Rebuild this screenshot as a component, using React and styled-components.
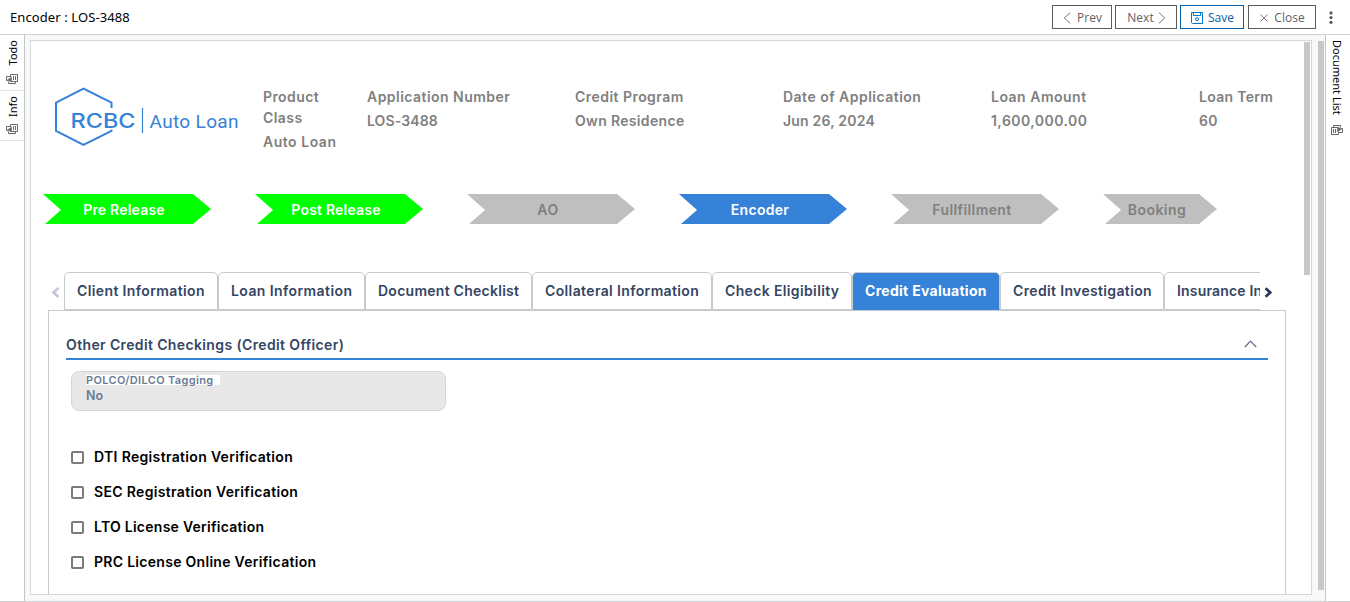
import React from "react";
import styled, { createGlobalStyle } from "styled-components";

const Global = createGlobalStyle`
  *, *::before, *::after { box-sizing: border-box; }
  body { margin: 0; background: #fff; overflow: hidden; font-family: "Open Sans", sans-serif; }
`;

const Page = styled.div`
  display: flex;
  flex-direction: column;
  width: 1350px;
  height: 602px;
`;

const TopBar = styled.header`
  flex: none;
  display: flex;
  align-items: center;
  justify-content: space-between;
  height: 35px;
  padding: 0 17px 0 10px;
  border-bottom: 1px solid #d1d2d4;
`;

const Title = styled.h1`
  margin: 0;
  font: 400 13px/18px "Noto Sans", sans-serif;
  letter-spacing: 0.1px;
  color: #000;
`;

const Actions = styled.div`
  display: flex;
  align-items: center;
`;

const ActionButton = styled.button`
  display: flex;
  align-items: center;
  justify-content: center;
  gap: ${(p) => p.$gap || 6}px;
  width: ${(p) => p.$w}px;
  height: 24px;
  margin: 0 ${(p) => p.$after}px 0 0;
  padding: 2px 0 0 1px;
  border: 1px solid ${(p) => (p.$primary ? "#0461a5" : "#5a5b5d")};
  background: #fff;
  color: ${(p) => (p.$primary ? "#0461a5" : "#5f6062")};
  font: 400 12px/16px "Open Sans", sans-serif;
`;

const Body = styled.div`
  display: flex;
  height: 567px;
  border-bottom: 1px solid #d1d2d4;
`;

const LeftRail = styled.aside`
  flex: none;
  width: 25px;
  border-right: 1px solid #c4c5c7;
`;

const RailItem = styled.div`
  display: flex;
  flex-direction: column;
  align-items: center;
  justify-content: space-between;
  height: ${(p) => p.$h}px;
  padding: 5px 0 6px;
  border-bottom: 1px solid #e1e2e3;
`;

const RailLabel = styled.span`
  writing-mode: vertical-rl;
  transform: ${(p) => (p.$up ? "rotate(180deg)" : "none")};
  margin-left: ${(p) => (p.$up ? 2 : 0)}px;
  font: 400 11px/16px "Noto Sans", sans-serif;
  color: #000;
`;

const RightRail = styled.aside`
  flex: none;
  display: flex;
  flex-direction: column;
  align-items: center;
  gap: 10px;
  width: 25px;
  padding: 5px 2px 0 0;
  border-left: 1px solid #c4c5c7;
`;

const Content = styled.div`
  flex: 1;
  display: flex;
  align-items: flex-start;
  min-width: 0;
  padding: 5px 1px 0 5px;
  background: #f7f8fa;
`;

const Frame = styled.div`
  flex: 1;
  display: flex;
  height: 555px;
  min-width: 0;
  padding-right: 1px;
  border: 1px solid #d6d7d8;
  background: #fff;
`;

const Thumb = styled.div`
  flex: none;
  width: 6px;
  height: ${(p) => p.$h}px;
  margin-top: 1px;
  margin-left: ${(p) => p.$left || 0}px;
  background: #c8c8c8;
`;

const Main = styled.main`
  flex: 1;
  min-width: 0;
  height: 553px;
  overflow: hidden;
  font-family: Inter, sans-serif;
  font-size: 14px;
  font-weight: 600;
`;

const Summary = styled.section`
  display: flex;
  height: 153px;
  padding: 45px 0 0 23px;
`;

const LogoBox = styled.div`
  flex: none;
  width: 209px;
`;

const SummaryItem = styled.dl`
  flex: none;
  width: ${(p) => p.$w || 208}px;
  margin: 0;
  padding-right: 30px;
  color: #808080;
`;

const Term = styled.dt`
  line-height: 21px;
  letter-spacing: ${(p) => p.$ls}px;
`;

const Value = styled.dd`
  margin: 3px -30px 0 0;
  line-height: 21px;
  letter-spacing: ${(p) => p.$ls}px;
`;

const Steps = styled.nav`
  display: flex;
  gap: 44px;
  height: 30px;
  padding-left: 12px;
`;

const Step = styled.div`
  flex: none;
  width: ${(p) => p.$w || 168}px;
  height: 30px;
  padding: 1px 6px 0 0;
  clip-path: polygon(0 0, calc(100% - 18px) 0, 100% 50%, calc(100% - 18px) 100%, 2px 100%, 18px 53%);
  background: ${(p) => (p.$state === "done" ? "#00ff00" : p.$state === "active" ? "#3682d9" : "#bfbfbf")};
  color: ${(p) => (p.$state === "idle" ? "#808080" : "#fff")};
  line-height: 29px;
  text-align: center;
  letter-spacing: ${(p) => p.$ls}px;
`;

const TabStrip = styled.div`
  display: flex;
  align-items: center;
  height: 38px;
  margin: 48px 0 0 20px;
`;

const TabArrow = styled.span`
  flex: none;
  display: flex;
  width: 13px;
  padding-top: 3px;
`;

const TabList = styled.div`
  flex: none;
  display: flex;
  width: 1196px;
  overflow: hidden;
`;

const Tab = styled.div`
  flex: none;
  width: ${(p) => p.$w}px;
  height: 38px;
  padding-left: 12px;
  border: 1px solid #c8c9ca;
  border-bottom-color: ${(p) => (p.$active ? "#3682d9" : "#c8c9ca")};
  border-radius: 5px 5px 0 0;
  background: ${(p) => (p.$active ? "#3682d9" : "#fff")};
  color: ${(p) => (p.$active ? "#fff" : "#344563")};
  font-weight: ${(p) => (p.$active ? 700 : 600)};
  line-height: 36px;
  white-space: nowrap;
  letter-spacing: ${(p) => p.$ls}px;
`;

const Panel = styled.section`
  width: 1238px;
  height: 320px;
  margin-left: 17px;
  padding: 21px 17px 0;
  border: 1px solid #c8c9ca;
`;

const SectionHeader = styled.div`
  display: flex;
  align-items: center;
  justify-content: space-between;
  height: 28px;
  padding: 0 11px 2px 0;
  border-bottom: 2px solid #3682d9;
  color: #344563;
`;

const SectionTitle = styled.h2`
  margin: 0;
  font: inherit;
  letter-spacing: ${(p) => p.$ls}px;
`;

const Field = styled.div`
  display: flex;
  flex-direction: column;
  align-items: flex-start;
  width: 375px;
  height: 40px;
  margin: 11px 0 0 5px;
  padding: 3px 14px 0;
  border: 1px solid #d5d5d5;
  border-radius: 8px;
  background: #e8e8e8;
  color: #6b7c95;
`;

const FieldLabel = styled.label`
  width: 134px;
  height: 10px;
  background: #fff;
  font-size: 11px;
  font-weight: 600;
  line-height: 11px;
  white-space: nowrap;
  letter-spacing: ${(p) => p.$ls}px;
`;

const FieldValue = styled.span`
  margin-top: 2px;
  font-size: 12.5px;
  line-height: 18px;
`;

const CheckList = styled.div`
  display: flex;
  flex-direction: column;
  margin: 29px 0 0 5px;
`;

const CheckRow = styled.label`
  display: flex;
  align-items: center;
  gap: 10px;
  height: 35px;
  color: #000;
  letter-spacing: ${(p) => p.$ls}px;
`;

const CheckText = styled.span`
  padding-bottom: 2px;
`;

const Box = styled.span`
  width: 13px;
  height: 13px;
  border: 2px solid #7b7b7b;
  border-radius: 2px;
  background: #fff;
`;

const LogoSvg = styled.svg`
  display: block;
`;

const Logo = () => (
  <LogoSvg width="186" height="62" viewBox="0 0 186 62" fill="none" stroke="#3682d9">
    <path d="M57.5 22V16.5L29.5 2.5L2 16.5V45L29.5 59L57.5 45V43.5" strokeWidth="2" />
    <path d="M88.5 22V47" strokeWidth="1.2" />
    <g fill="#3682d9" stroke="none">
      <text x="16.5" y="42" fontFamily="Inter, sans-serif" fontSize="20.5" fontWeight="500" textLength="65" lengthAdjust="spacingAndGlyphs">RCBC</text>
      <text x="95.5" y="41.5" fontFamily="Roboto, sans-serif" fontSize="19" fontWeight="400" textLength="89" lengthAdjust="spacing">Auto Loan</text>
    </g>
  </LogoSvg>
);

const PanelIcon = ({ flip }) => (
  <svg width="12" height="10" viewBox="0 0 12 10" fill="none" stroke="#68696b">
    <g transform={flip ? "rotate(180 6 5)" : undefined}>
      <path d="M4.5 3V0.5H11.5V7.5H5M9.5 7.5V9.5H2.5V7.5M4.5 2.5H0.5V6.5H2" />
      <path d="M7.5 2V6M9.5 2V6" />
      <path d="M1.5 6L5.5 3V8Z" fill="#68696b" strokeWidth=".6" />
    </g>
  </svg>
);

const AngleIcon = ({ d, w = 8, h = 12, color = "#77787a", stroke = 1 }) => (
  <svg width={w} height={h} viewBox={`0 0 ${w} ${h}`} fill="none" stroke={color} strokeWidth={stroke}>
    <path d={d} />
  </svg>
);

const SaveIcon = () => (
  <svg width="12" height="12" viewBox="0 0 12 12" fill="none" stroke="#0078c8">
    <path d="M0.5 0.5H11.5V11.5H1.5L0.5 10.5ZM2.5 0.5V3.5H9.5V0.5" />
    <circle cx="6" cy="7.2" r="1.5" />
  </svg>
);

const MoreIcon = () => (
  <svg width="4" height="13" viewBox="0 0 4 13" fill="#58595b">
    <circle cx="2" cy="1.9" r="1.6" />
    <circle cx="2" cy="6.6" r="1.6" />
    <circle cx="2" cy="11.3" r="1.6" />
  </svg>
);

const summary = [
  { label: "Product Class", value: "Auto Loan", w: 104, l: 0.42, v: 0.52 },
  { label: "Application Number", value: "LOS-3488", l: 0.46, v: 0.1 },
  { label: "Credit Program", value: "Own Residence", l: 0.46, v: 0.33 },
  { label: "Date of Application", value: "Jun 26, 2024", l: 0.48, v: 0.2 },
  { label: "Loan Amount", value: "1,600,000.00", l: 0.5, v: 0.45 },
  { label: "Loan Term", value: "60", l: 0.3, v: 0.3 },
];

const steps = [
  { name: "Pre Release", state: "done", ls: 0.2 },
  { name: "Post Release", state: "done", ls: 0.2 },
  { name: "AO", state: "idle", ls: 0.5 },
  { name: "Encoder", state: "active", ls: 0.3 },
  { name: "Fullfillment", state: "idle", ls: 0.4 },
  { name: "Booking", state: "idle", ls: 0.45, w: 114 },
];

const tabs = [
  { name: "Client Information", w: 154, ls: 0.38 },
  { name: "Loan Information", w: 147, ls: 0.41 },
  { name: "Document Checklist", w: 167, ls: 0.26 },
  { name: "Collateral Information", w: 180, ls: 0.37 },
  { name: "Check Eligibility", w: 140, ls: 0.36 },
  { name: "Credit Evaluation", w: 148, ls: 0.29, active: true },
  { name: "Credit Investigation", w: 164, ls: 0.35 },
  { name: "Insurance Information", w: 172, ls: 0.18 },
];

const checks = [
  { name: "DTI Registration Verification", ls: 0.33 },
  { name: "SEC Registration Verification", ls: 0.33 },
  { name: "LTO License Verification", ls: 0.26 },
  { name: "PRC License Online Verification", ls: 0.29 },
];

export default function App() {
  return (
    <Page>
      <Global />
      <TopBar>
        <Title>Encoder : LOS-3488</Title>
        <Actions>
          <ActionButton $w={60} $after={3}><AngleIcon d="M7.3 0.7L1.2 6L7.3 11.3" />Prev</ActionButton>
          <ActionButton $w={62} $after={3} $gap={4}>Next<AngleIcon d="M1 0.7L6.8 6L1 11.3" /></ActionButton>
          <ActionButton $w={64} $after={4} $primary $gap={5}><SaveIcon />Save</ActionButton>
          <ActionButton $w={68} $after={13}><AngleIcon w={8} h={8} d="M0.5 0.5L7.5 7.5M7.5 0.5L0.5 7.5" />Close</ActionButton>
          <MoreIcon />
        </Actions>
      </TopBar>
      <Body>
        <LeftRail>
          <RailItem $h={56}><RailLabel $up>Todo</RailLabel><PanelIcon /></RailItem>
          <RailItem $h={50}><RailLabel $up>Info</RailLabel><PanelIcon /></RailItem>
        </LeftRail>
        <Content>
          <Frame>
            <Main>
              <Summary>
                <LogoBox><Logo /></LogoBox>
                {summary.map((s) => (
                  <SummaryItem key={s.label} $w={s.w}>
                    <Term $ls={s.l}>{s.label}</Term>
                    <Value $ls={s.v}>{s.value}</Value>
                  </SummaryItem>
                ))}
              </Summary>
              <Steps>
                {steps.map((s) => <Step key={s.name} $state={s.state} $w={s.w} $ls={s.ls}>{s.name}</Step>)}
              </Steps>
              <TabStrip>
                <TabArrow><AngleIcon w={9} h={11} d="M7.5 1L2.5 5.5L7.5 10" color="#c1c7d0" stroke={2.6} /></TabArrow>
                <TabList>
                  {tabs.map((t) => <Tab key={t.name} $w={t.w} $ls={t.ls} $active={t.active}>{t.name}</Tab>)}
                </TabList>
                <TabArrow><AngleIcon w={14} h={11} d="M6 1L11 5.5L6 10" color="#253858" stroke={2.8} /></TabArrow>
              </TabStrip>
              <Panel>
                <SectionHeader>
                  <SectionTitle $ls={0.37}>Other Credit Checkings (Credit Officer)</SectionTitle>
                  <AngleIcon w={13} h={8} d="M0.8 7L6.5 1.2L12.2 7" color="#5e6c94" stroke={1.2} />
                </SectionHeader>
                <Field>
                  <FieldLabel $ls={0.34}>POLCO/DILCO Tagging</FieldLabel>
                  <FieldValue>No</FieldValue>
                </Field>
                <CheckList>
                  {checks.map((c) => (
                    <CheckRow key={c.name} $ls={c.ls}><Box /><CheckText>{c.name}</CheckText></CheckRow>
                  ))}
                </CheckList>
              </Panel>
            </Main>
            <Thumb $h={233} />
          </Frame>
          <Thumb $h={549} $left={6} />
        </Content>
        <RightRail>
          <RailLabel>Document List</RailLabel>
          <PanelIcon flip />
        </RightRail>
      </Body>
    </Page>
  );
}
